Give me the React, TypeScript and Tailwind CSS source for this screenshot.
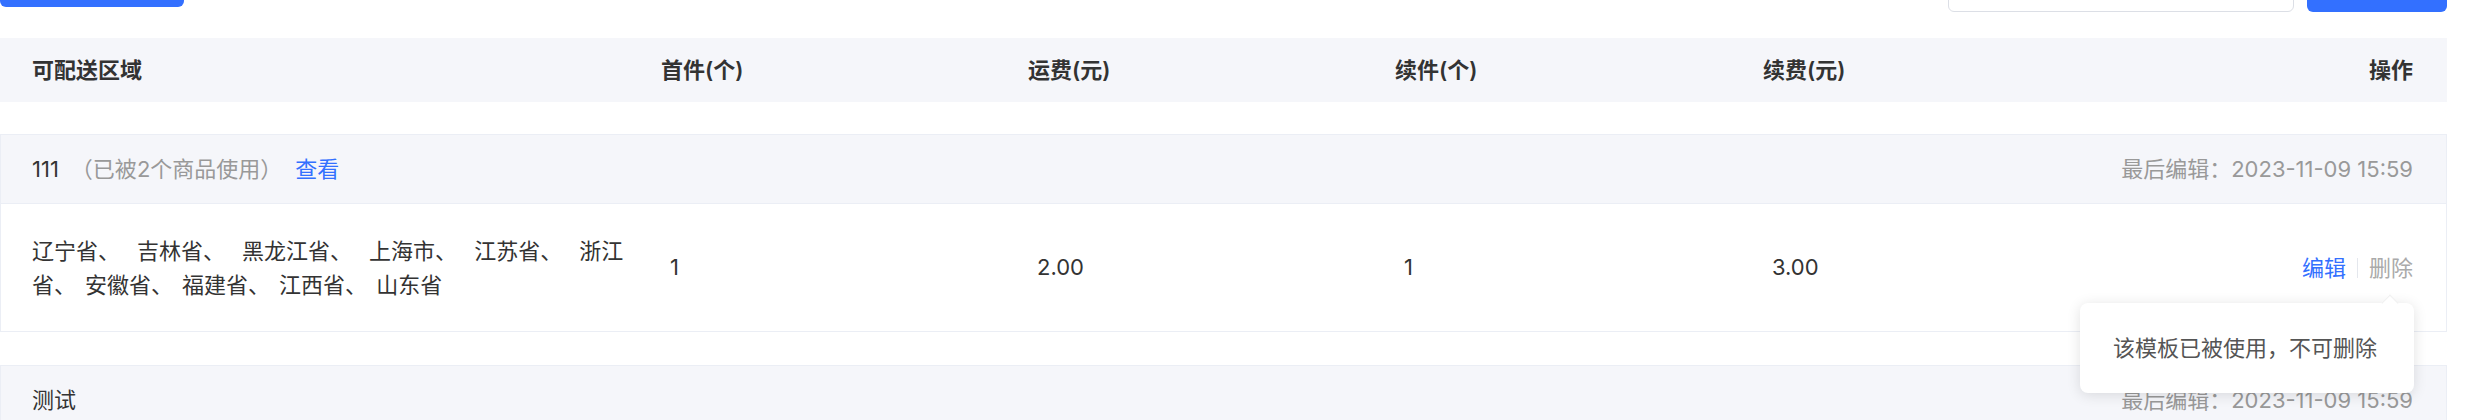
import React from 'react'

const regions = ['辽宁省', '吉林省', '黑龙江省', '上海市', '江苏省', '浙江省', '安徽省', '福建省', '江西省', '山东省']

const cols = 'grid grid-cols-[661px_367px_367px_368px_1fr_auto] items-center'

const GroupHead = ({ name, used }: { name: string; used?: number }) => (
  <div className="h-[68px] bg-[#f5f6fa] flex items-center justify-between pl-[31px] pr-[33px] text-[22px] leading-[22px]">
    <div className="flex items-center">
      <span className="text-[#333]">{name}</span>
      {used !== undefined && (
        <>
          <span className="ml-[12px] text-[#999]">（已被{used}个商品使用）</span>
          <span className="ml-[13px] text-[#3370ff]">查看</span>
        </>
      )}
    </div>
    <span className="text-[#999]">最后编辑：2023-11-09 15:59</span>
  </div>
)

export default function App() {
  return (
    <div className="w-[2468px] h-[420px] overflow-hidden bg-white font-['Inter','Noto_Sans_CJK_SC',sans-serif]">
      <div className="flex items-start h-[38px] pr-[21px]">
        <button className="w-[184px] h-[40px] -mt-[33px] rounded-[6px] bg-[#3370ff]" />
        <div className="ml-auto flex items-start gap-[13px]">
          <div className="w-[346px] h-[40px] -mt-[28px] rounded-[6px] border border-[#dcdfe6] bg-white" />
          <button className="w-[140px] h-[40px] -mt-[28px] rounded-[6px] bg-[#3370ff]" />
        </div>
      </div>

      <div className={`${cols} h-[64px] mr-[21px] bg-[#f5f6fa] text-[22px] font-semibold text-[#333]`}>
        <div className="pl-[32px]">可配送区域</div>
        <div>首件(个)</div>
        <div>运费(元)</div>
        <div>续件(个)</div>
        <div>续费(元)</div>
        <div className="pr-[34px]">操作</div>
      </div>

      <div className="mt-[32px] mr-[21px] border border-[#ebeef5]">
        <GroupHead name="111" used={2} />
        <div className={`${cols} h-[128px] border-t border-[#ebeef5] text-[22px] text-[#333]`}>
          <div className="pl-[31px]">
            {/* first line is stretched like justified text, last line is not */}
            <div className="w-[600px] leading-[34px]">
              {regions.map((r, i) => (
                <React.Fragment key={r}>
                  {r}
                  {i < regions.length - 1 && (
                    <span className={i < 5 ? 'mr-[17px]' : 'mr-[9px]'}>、</span>
                  )}
                </React.Fragment>
              ))}
            </div>
          </div>
          <div className="pl-[8px]">1</div>
          <div className="pl-[8px]">2.00</div>
          <div className="pl-[8px]">1</div>
          <div className="pl-[8px]">3.00</div>
          <div className="flex items-center pr-[33px] leading-[22px]">
            <span className="text-[#3370ff]">编辑</span>
            <span className="mx-[11px] w-px h-[20px] bg-[#e4e7ed]" />
            <span className="relative text-[#aaa]">
              删除
              <div className="absolute right-[-1px] top-[calc(100%+24px)] z-10 w-[334px] h-[90px] pl-[33px] flex items-center bg-white rounded-[8px] shadow-[0_2px_14px_rgba(0,0,0,0.12)] text-[22px] text-[#555] whitespace-nowrap">
                <span className="absolute -top-[6px] right-[18px] w-[12px] h-[12px] rotate-45 bg-white border-l border-t border-[#f0f0f0]" />
                该模板已被使用，不可删除
              </div>
            </span>
          </div>
        </div>
      </div>

      <div className="mt-[33px] mr-[21px] border border-[#ebeef5]">
        <GroupHead name="测试" />
      </div>
    </div>
  )
}
